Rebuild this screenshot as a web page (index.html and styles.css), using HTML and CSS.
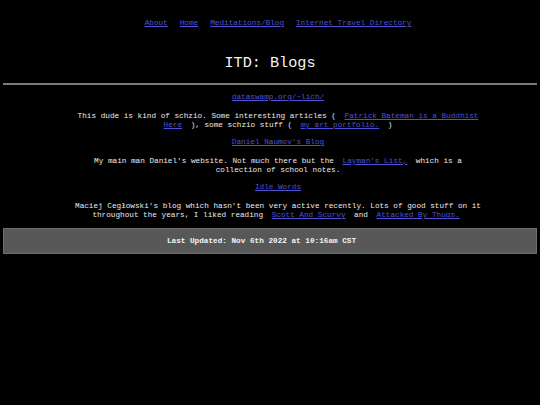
FILE: index.html
```html
<!DOCTYPE html>
<html>
<head>
<meta charset="utf-8">
<title>ITD: Blogs</title>
<link rel="stylesheet" href="styles.css">
</head>
<body>
<nav class="nav">
  <a href="#">About</a>
  <a href="#">Home</a>
  <a href="#">Meditations/Blog</a>
  <a href="#">Internet Travel Directory</a>
</nav>
<h1 class="title">ITD: Blogs</h1>
<hr class="rule">
<main class="list">
  <section class="entry">
    <a class="entry-link" href="#">dataswamp.org/~lich/</a>
    <p class="desc">This dude is kind of schzio. Some interesting articles ( <a class="inline" href="#">Patrick Bateman is a Buddhist Here</a> ), some schzio stuff ( <a class="inline" href="#">my art portfolio.</a> )</p>
  </section>
  <section class="entry">
    <a class="entry-link" href="#">Daniel Naumov's Blog</a>
    <p class="desc">My main man Daniel's website. Not much there but the <a class="inline" href="#">Layman's List,</a> which is a collection of school notes.</p>
  </section>
  <section class="entry">
    <a class="entry-link" href="#">Idle Words</a>
    <p class="desc">Maciej Cegłowski's blog which hasn't been very active recently. Lots of good stuff on it throughout the years, I liked reading <a class="inline" href="#">Scott And Scurvy</a> and <a class="inline" href="#">Attacked By Thugs.</a></p>
  </section>
</main>
<footer class="footer">Last Updated: Nov 6th 2022 at 10:16am CST</footer>
</body>
</html>
```
FILE: styles.css
```css
html, body {
  background: #000;
}
body {
  margin: 0;
  padding: 0 3px;
  color: #ececec;
  font-family: "Liberation Mono", "DejaVu Sans Mono", monospace;
  font-size: 7.7px;
  line-height: 9.5px;
}
a {
  color: #5050d4;
  text-decoration: underline;
}
.nav {
  display: flex;
  justify-content: center;
  gap: 12px;
  padding-top: 18px;
  padding-left: 16px;
  line-height: 10px;
}
.title {
  margin: 0;
  padding-top: 26px;
  text-align: center;
  font-weight: normal;
  font-size: 15.2px;
  line-height: 18px;
  color: #f4f4f4;
}
.rule {
  margin: 11px 0 0 0;
  border: 0;
  height: 2px;
  background: #7a7a7a;
}
.list {
  padding-top: 7px;
  padding-left: 16px;
}
.entry {
  display: flex;
  flex-direction: column;
  align-items: center;
  margin-bottom: 6.7px;
}
.entry-link {
  line-height: 10px;
}
.desc {
  margin: 9.7px 0 0 0;
  width: 414px;
  line-height: 9.33px;
  text-align: center;
}
.inline {
  margin: 0 4px;
}
.footer {
  margin-top: 7.5px;
  height: 24.5px;
  line-height: 24.5px;
  padding-right: 17px;
  background: #585858;
  border: 1px solid #6e6e6e;
  text-align: center;
  font-weight: bold;
  color: #f4f4f4;
}
```
